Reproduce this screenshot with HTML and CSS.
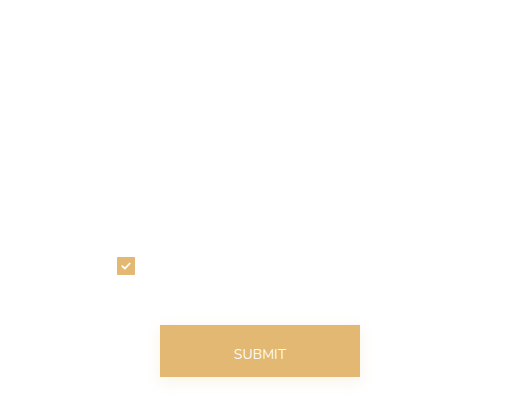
FILE: index.html
```html
<!DOCTYPE html>
<html>
<head>
<meta charset="utf-8">
<link rel="stylesheet" href="styles.css">
</head>
<body>
<div class="page">
  <label class="check-row">
    <span class="checkbox">
      <svg width="12" height="12" viewBox="0 0 12 12"><path d="M2.3 6.2 L4.9 8.6 L9.7 3.5" fill="none" stroke="#fff" stroke-width="1.8" stroke-linecap="round" stroke-linejoin="round"/></svg>
    </span>
  </label>
  <div class="actions">
    <button class="submit">SUBMIT</button>
  </div>
</div>
</body>
</html>
```
FILE: styles.css
```css
html, body {
  margin: 0;
  padding: 0;
  background: #fff;
}
.page {
  width: 521px;
  height: 402px;
  padding-top: 257px;
  box-sizing: border-box;
}
.check-row {
  display: flex;
  padding-left: 117px;
  height: 18px;
}
.checkbox {
  width: 18px;
  height: 18px;
  background: #e2b872;
  border-radius: 1px;
  display: flex;
  align-items: center;
  justify-content: center;
}
.actions {
  display: flex;
  padding-left: 160px;
  margin-top: 50px;
}
.submit {
  width: 200px;
  height: 52px;
  border: none;
  background: #e2b872;
  color: rgba(255,255,255,0.95);
  font-family: "Nunito", "Lato", "Open Sans", sans-serif;
  font-size: 14px;
  padding: 7px 0 0;
  box-shadow: 0 4px 14px rgba(226,184,114,0.18);
  cursor: pointer;
}
```
